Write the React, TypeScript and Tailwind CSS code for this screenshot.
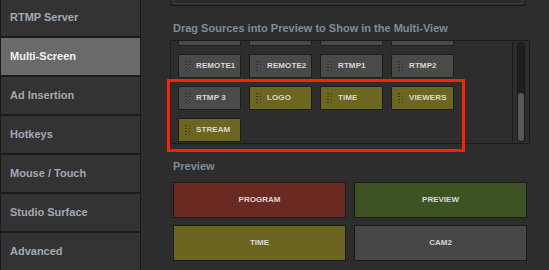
import React from 'react';

const font = { fontFamily: '"Liberation Sans", Arial, sans-serif' };

const menu = ['RTMP Server', 'Multi-Screen', 'Ad Insertion', 'Hotkeys', 'Mouse / Touch', 'Studio Surface', 'Advanced'];

type Tile = { label: string; olive?: boolean };

const sources: Tile[] = [
  { label: '' }, { label: '' }, { label: '' }, { label: '' },
  { label: 'REMOTE1' }, { label: 'REMOTE2' }, { label: 'RTMP1' }, { label: 'RTMP2' },
  { label: 'RTMP 3' }, { label: 'LOGO', olive: true }, { label: 'TIME', olive: true }, { label: 'VIEWERS', olive: true },
  { label: 'STREAM', olive: true },
];

const Grip = ({ olive }: { olive?: boolean }) => (
  <div className="grid grid-cols-2 gap-x-[2px] gap-y-[1.5px]">
    {Array.from({ length: 8 }).map((_, i) => (
      <span key={i} className={`block w-[1.5px] h-[1.5px] ${olive ? 'bg-[#3e3a10]' : 'bg-[#2c2c2c]'}`} />
    ))}
  </div>
);

const SourceTile = ({ tile }: { tile: Tile }) => (
  <div
    className={`h-[24px] rounded-[1px] border border-[#1c1c1c] flex items-center pl-[6px] gap-[6px] ${
      tile.olive ? 'bg-[#6c6621]' : 'bg-[#4a4a4a]'
    }`}
  >
    <Grip olive={tile.olive} />
    <span className="text-[8px] font-bold leading-none text-[#d8d8d8] tracking-[0.1px]">{tile.label}</span>
  </div>
);

const previews = [
  { label: 'PROGRAM', bg: 'bg-[#6a2a22]' },
  { label: 'PREVIEW', bg: 'bg-[#3e5322]' },
  { label: 'TIME', bg: 'bg-[#6b6520]' },
  { label: 'CAM2', bg: 'bg-[#474747]' },
];

export default function App() {
  return (
    <div className="w-[549px] h-[270px] flex overflow-hidden bg-[#2d2d2d]" style={font}>
      {/* Sidebar */}
      <div className="w-[141px] shrink-0 bg-[#1b1b1b] flex flex-col gap-[2px] -mt-[1px]">
        {menu.map((m) => (
          <div
            key={m}
            className={`ml-[1px] w-[139px] h-[37px] shrink-0 flex items-center pl-[9px] text-[11px] font-bold ${
              m === 'Multi-Screen' ? 'bg-[#6a6a6a] text-[#f2f2f2]' : 'bg-[#333333] text-[#a0aab5]'
            }`}
          >
            {m}
          </div>
        ))}
      </div>

      {/* Main */}
      <div className="relative flex-1 pl-[29px] pr-[19px]">
        <div className="h-[6px] w-[356px] border border-t-0 border-[#1b1b1b] bg-[#2a2a2a]">
          <div className="h-[4px] mx-[2px] border-b border-x border-[#3c3c3c]" />
        </div>

        <div className="mt-[16px] pl-[3px] h-[13px] leading-[13px] text-[11px] font-bold text-[#7f8c9a] whitespace-nowrap">
          Drag Sources into Preview to Show in the Multi-View
        </div>

        {/* Sources box */}
        <div className="mt-[5px] h-[104px] border border-[#1b1b1b] flex">
          <div className="flex-1 overflow-hidden pl-[7px]">
            <div className="-mt-[19px] grid grid-cols-[repeat(4,63px)] gap-x-[8px] gap-y-[8px]">
              {sources.map((t, i) => (
                <SourceTile key={i} tile={t} />
              ))}
            </div>
          </div>
          <div className="w-[17px] border-l border-[#1b1b1b] py-[1px] flex justify-center">
            <div className="w-[8px] h-full rounded-full bg-[#1f1f1f] border border-[#191919] flex flex-col justify-end">
              <div className="h-[48px] rounded-full bg-[#585858]" />
            </div>
          </div>
        </div>

        <div className="mt-[16px] pl-[3px] h-[13px] leading-[13px] text-[11px] font-bold text-[#7f8c9a]">Preview</div>

        <div className="mt-[9px] ml-[3px] grid grid-cols-[repeat(2,173px)] gap-x-[8px] gap-y-[7px]">
          {previews.map((p) => (
            <div
              key={p.label}
              className={`h-[36px] border border-[#1a1a1a] flex items-center justify-center text-[8px] font-bold text-[#dadada] ${p.bg}`}
            >
              {p.label}
            </div>
          ))}
        </div>

        {/* highlight annotation */}
        <div className="absolute left-[26px] top-[79px] w-[298px] h-[73px] border-[3px] border-[#ff2000] pointer-events-none" />
      </div>
    </div>
  );
}
